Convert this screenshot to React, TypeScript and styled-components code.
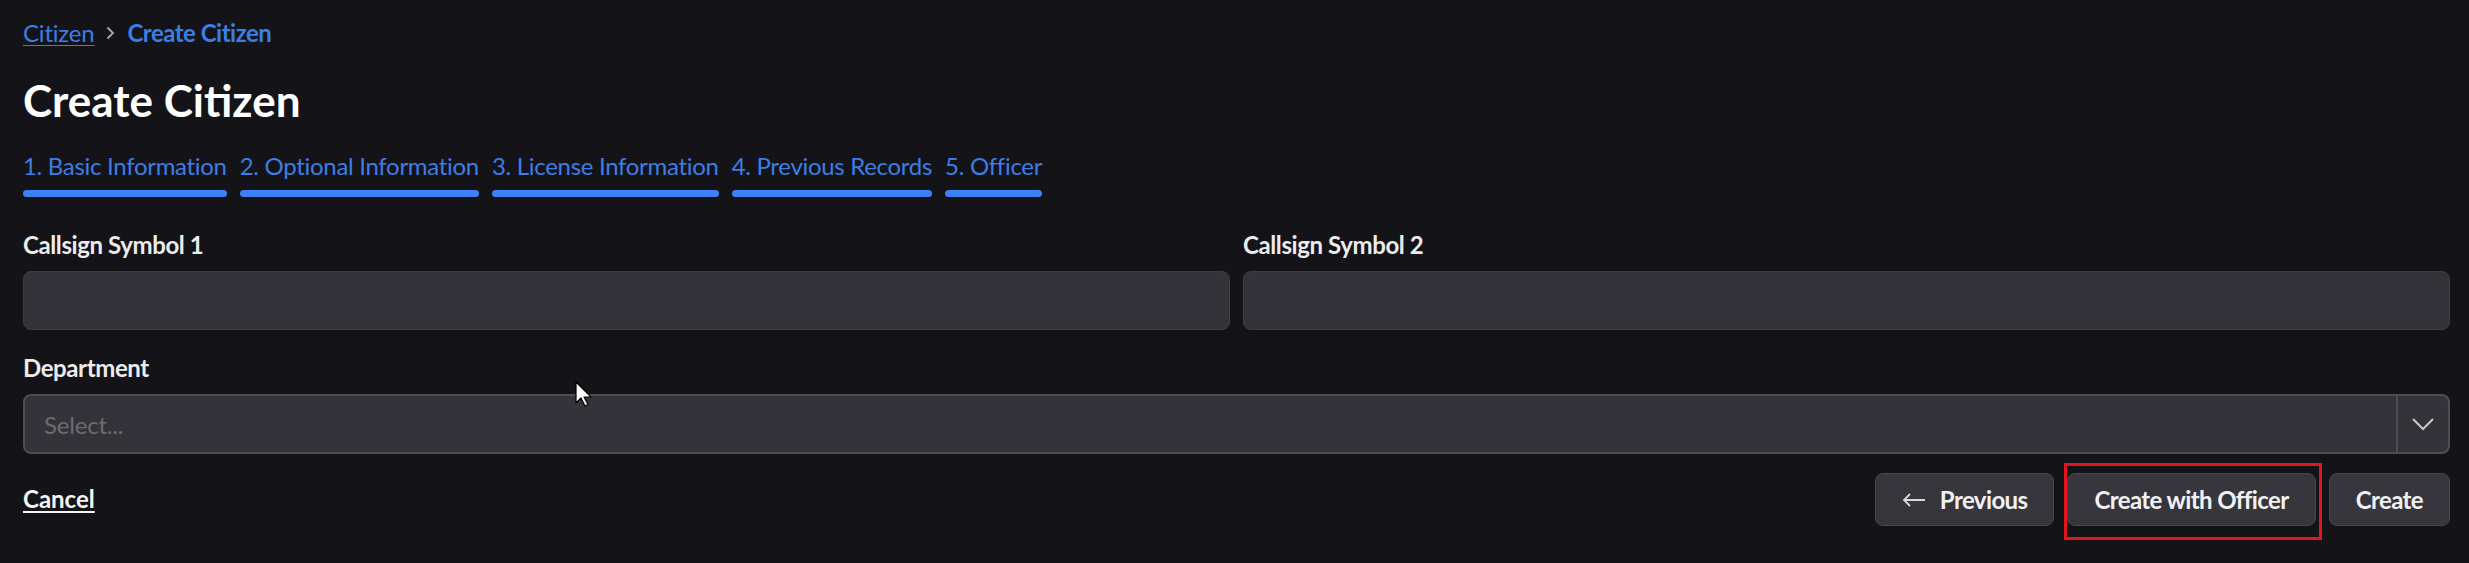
import React from "react";
import styled, { createGlobalStyle } from "styled-components";

const GlobalStyle = createGlobalStyle`
  html, body {
    margin: 0;
    padding: 0;
    background: #141318;
  }
  body {
    font-family: Lato, "Noto Sans", sans-serif;
    color: #f2f2f4;
  }
  * { box-sizing: border-box; }
`;

const Page = styled.main`
  position: relative;
  padding: 15px 19px 40px 23px;
  min-height: 563px;
`;

const Breadcrumb = styled.nav`
  display: flex;
  align-items: center;
  gap: 12px;
  height: 36px;
  font-size: 24px;
  line-height: 36px;
`;

const CrumbLink = styled.a`
  color: #3b7ee6;
  text-decoration: underline;
  text-underline-offset: 3px;
  text-decoration-thickness: 1px;
  letter-spacing: -0.2px;
`;

const CrumbCurrent = styled.span`
  color: #3b7ee6;
  font-weight: 700;
  letter-spacing: -0.5px;
`;

const Title = styled.h1`
  margin: 22px 0 0;
  font-size: 44px;
  line-height: 54px;
  font-weight: 700;
  color: #ffffff;
`;

const Steps = styled.div`
  display: flex;
  gap: 13px;
  margin-top: 21px;
`;

const Step = styled.div`
  display: flex;
  flex-direction: column;
  gap: 6px;
`;

const StepLabel = styled.span`
  font-size: 24px;
  line-height: 36px;
  color: #3b7ee6;
  white-space: nowrap;
  letter-spacing: -0.3px;
`;

const StepBar = styled.span`
  display: block;
  height: 7px;
  border-radius: 4px;
  background: #3b82f6;
`;

const FieldGrid = styled.div<{ $cols: number; $top: number }>`
  display: grid;
  grid-template-columns: repeat(${(p) => p.$cols}, 1fr);
  gap: 13px;
  margin-top: ${(p) => p.$top}px;
`;

const Field = styled.label`
  display: flex;
  flex-direction: column;
  gap: 8px;
`;

const Label = styled.span`
  font-size: 24px;
  line-height: 36px;
  font-weight: 700;
  color: #ececee;
  letter-spacing: -0.4px;
`;

const TextInput = styled.input`
  height: 59px;
  width: 100%;
  border-radius: 8px;
  border: 1px solid #3e3e44;
  background: #333339;
  color: #f2f2f4;
  font-family: inherit;
  font-size: 24px;
  padding: 0 20px;
  outline: none;
`;

const SelectBox = styled.div`
  display: flex;
  height: 60px;
  border-radius: 8px;
  border: 2px solid #4d4d53;
  background: #333339;
  overflow: hidden;
`;

const SelectValue = styled.span`
  flex: 1;
  display: flex;
  align-items: center;
  padding-left: 19px;
  font-size: 24px;
  color: #6c6c72;
  letter-spacing: -0.2px;
`;

const SelectToggle = styled.span`
  width: 52px;
  display: flex;
  align-items: center;
  justify-content: center;
  border-left: 2px solid #4d4d53;
`;

const Footer = styled.div`
  display: flex;
  justify-content: space-between;
  align-items: center;
  margin-top: 19px;
`;

const CancelLink = styled.a`
  font-size: 24px;
  font-weight: 700;
  color: #f5f5f7;
  text-decoration: underline;
  text-underline-offset: 3px;
  text-decoration-thickness: 2px;
  margin-top: -3px;
`;

const ButtonGroup = styled.div`
  display: flex;
  gap: 13px;
`;

const ButtonWrap = styled.span`
  position: relative;
  display: inline-flex;
`;

const Button = styled.button`
  display: inline-flex;
  align-items: center;
  gap: 14px;
  height: 53px;
  padding: 0 26px;
  border-radius: 8px;
  border: 1px solid #46464c;
  background: #36363c;
  color: #f2f2f4;
  font-family: inherit;
  font-size: 24px;
  font-weight: 700;
  letter-spacing: -0.6px;
  cursor: pointer;
`;

const Highlight = styled.span`
  position: absolute;
  top: -10px;
  left: -3px;
  right: -6px;
  bottom: -14px;
  border: 3px solid #e3141d;
  pointer-events: none;
`;

const Cursor = styled.svg`
  position: absolute;
  left: 575px;
  top: 381px;
  pointer-events: none;
`;

const steps = [
  "1. Basic Information",
  "2. Optional Information",
  "3. License Information",
  "4. Previous Records",
  "5. Officer",
];

export default function App() {
  return (
    <>
      <GlobalStyle />
      <Page>
        <Breadcrumb>
          <CrumbLink href="#">Citizen</CrumbLink>
          <svg width="9" height="14" viewBox="0 0 9 14" fill="none">
            <path d="M1.5 1.5 7 7l-5.5 5.5" stroke="#a9a9ae" strokeWidth="1.8" />
          </svg>
          <CrumbCurrent>Create Citizen</CrumbCurrent>
        </Breadcrumb>

        <Title>Create Citizen</Title>

        <Steps>
          {steps.map((s) => (
            <Step key={s}>
              <StepLabel>{s}</StepLabel>
              <StepBar />
            </Step>
          ))}
        </Steps>

        <FieldGrid $cols={2} $top={30}>
          <Field>
            <Label>Callsign Symbol 1</Label>
            <TextInput />
          </Field>
          <Field>
            <Label>Callsign Symbol 2</Label>
            <TextInput />
          </Field>
        </FieldGrid>

        <FieldGrid $cols={1} $top={20}>
          <Field>
            <Label>Department</Label>
            <SelectBox>
              <SelectValue>Select...</SelectValue>
              <SelectToggle>
                <svg width="24" height="14" viewBox="0 0 24 14" fill="none">
                  <path d="M2 2l10 10L22 2" stroke="#c9c9cd" strokeWidth="2" />
                </svg>
              </SelectToggle>
            </SelectBox>
          </Field>
        </FieldGrid>

        <Footer>
          <CancelLink href="#">Cancel</CancelLink>
          <ButtonGroup>
            <Button>
              <svg width="24" height="14" viewBox="0 0 24 14" fill="none">
                <path d="M23 7H2M8 1 2 7l6 6" stroke="#d8d8dc" strokeWidth="1.8" />
              </svg>
              Previous
            </Button>
            <ButtonWrap>
              <Button>Create with Officer</Button>
              <Highlight />
            </ButtonWrap>
            <Button>Create</Button>
          </ButtonGroup>
        </Footer>

        <Cursor width="18" height="26" viewBox="0 0 18 26">
          <path
            d="M1 1v21l5-5 4 8 3-1.5-4-7.5h7z"
            fill="#ffffff"
            stroke="#000000"
            strokeWidth="1.2"
            strokeLinejoin="round"
          />
        </Cursor>
      </Page>
    </>
  );
}
